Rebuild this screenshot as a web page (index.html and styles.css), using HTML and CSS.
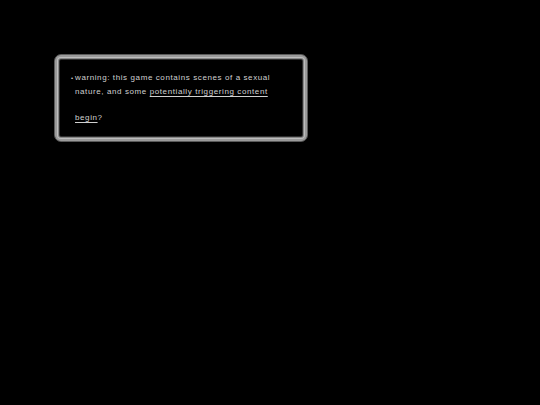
FILE: index.html
```html
<!DOCTYPE html>
<html lang="en" dir="ltr">
  <head>
    <meta charset="utf-8">
    <title>Warning</title>
    <link rel="stylesheet" href="styles.css">
  </head>
  <body>
    <div id="dialog">
      <div class="line">
        <span class="bullet">&bull;</span>
        <span class="msg">warning: this game contains scenes of a sexual nature, and some <a href="#cw" class="link">potentially triggering content</a></span>
      </div>
      <p class="choice"><a href="#start" class="link">begin</a>?</p>
    </div>
  </body>
</html>
```

FILE: styles.css
```css
body{
  margin:0;
  background:#000;
  color:#d0d0d0;
  font-family:"Liberation Sans", Arial, sans-serif;
  font-size:8px;
  letter-spacing:0.6px;
}
/*window frame*/
#dialog{
  box-sizing:border-box;
  width:254px;
  height:88px;
  margin:54px 0 0 54px;
  padding:16px 12px 0 16px;
  background:#000;
  border:1px solid #5a5a5a;
  border-radius:7px;
  box-shadow:
    inset 0 0 0 2px #9a9a9a,
    inset 0 0 0 3px #bdbdbd,
    inset 0 0 0 4px #868686,
    inset 0 0 0 5px #2e2e2e;
}
.line{
  display:flex;
  line-height:14px;
}
.bullet{
  width:4px;
  flex:none;
  font-size:6px;
}
.msg{
  width:205px;
}
.choice{
  margin:12px 0 0 4px;
  line-height:14px;
}
.link{
  color:#d0d0d0;
  text-decoration:underline;
  text-underline-offset:2px;
}
```
